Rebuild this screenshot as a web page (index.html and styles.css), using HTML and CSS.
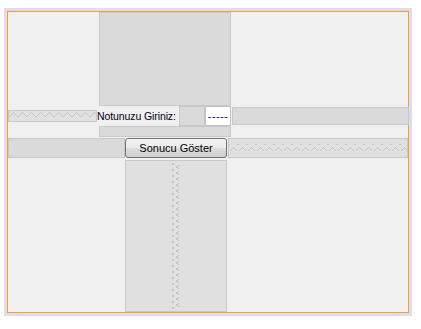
FILE: index.html
```html
<!DOCTYPE html>
<html lang="en">
<head>
    <meta charset="UTF-8">
    <title>Not Formu</title>
    <link rel="stylesheet" href="styles.css">
</head>
<body>
    <svg class="defs" width="0" height="0">
        <defs>
            <pattern id="zigH" width="9" height="7" patternUnits="userSpaceOnUse">
                <polyline points="0,6 4.5,1.5 9,6" fill="none" stroke="#c4c4c4" stroke-width="1" shape-rendering="crispEdges"/>
            </pattern>
            <pattern id="zigV" width="7" height="6" patternUnits="userSpaceOnUse">
                <polyline points="1,0 6,3 1,6" fill="none" stroke="#c4c4c4" stroke-width="1" shape-rendering="crispEdges"/>
            </pattern>
        </defs>
    </svg>

    <div class="selection">
        <div class="form">
            <div class="row row-top">
                <div class="gap gap-top"></div>
            </div>

            <div class="row row-input">
                <div class="gap zig gap-left">
                    <svg><rect x="0" y="1" width="100%" height="7" fill="url(#zigH)"/></svg>
                </div>
                <label class="caption">Notunuzu Giriniz:</label>
                <div class="gap gap-small"></div>
                <div class="field">-----</div>
                <div class="gap gap-right"></div>
            </div>

            <div class="row row-under">
                <div class="gap gap-under"></div>
            </div>

            <div class="row row-button">
                <div class="gap gap-btn-left"></div>
                <button class="btn">Sonucu Göster</button>
                <div class="gap zig gap-btn-right">
                    <svg><rect x="0" y="5" width="100%" height="7" fill="url(#zigH)"/></svg>
                </div>
            </div>

            <div class="row row-bottom">
                <div class="gap zig gap-bottom">
                    <svg><rect x="46" y="2" width="7" height="146" fill="url(#zigV)"/></svg>
                </div>
            </div>
        </div>
    </div>
</body>
</html>
```

FILE: styles.css
```css
* {
    box-sizing: border-box;
}

body {
    margin: 0;
    background: white;
    font-family: "Liberation Sans", Arial, sans-serif;
    font-size: 11px;
}

.defs {
    position: absolute;
}

.selection {
    margin: 8px 0 0 4px;
    width: 408px;
    padding: 3px;
    background: #dcdcf8;
}

.form {
    width: 402px;
    height: 302px;
    border: 1px solid #ffa500;
    background: #f0f0f0;
}

.row {
    display: flex;
    align-items: flex-start;
}

.gap {
    flex-shrink: 0;
    background: #dadada;
    border: 1px solid #c8c8c8;
}

.gap.zig {
    background: #e0e0e0;
}

.gap svg {
    display: block;
    width: 100%;
    height: 100%;
}

.row-top { height: 94px; }
.gap-top {
    width: 132px;
    height: 94px;
    margin-left: 91px;
}

.row-input { height: 20px; }
.gap-left {
    width: 89px;
    height: 12px;
    margin-top: 4px;
}

.caption {
    flex-shrink: 0;
    width: 82px;
    height: 20px;
    line-height: 21px;
    font-size: 10.5px;
    letter-spacing: -0.1px;
    color: #000018;
    white-space: nowrap;
}

.gap-small {
    width: 26px;
    height: 20px;
}

.field {
    flex-shrink: 0;
    width: 26px;
    height: 20px;
    background: white;
    border: 1px solid #c4c4c4;
    line-height: 18px;
    text-align: center;
    letter-spacing: 0.4px;
    color: #00008b;
}

.gap-right {
    width: 177px;
    height: 18px;
    margin: 1px 0 0 1px;
}

.row-under { height: 11px; margin-bottom: 1px; }
.gap-under {
    width: 132px;
    height: 11px;
    margin-left: 91px;
}

.row-button { height: 20px; margin-bottom: 2px; }
.gap-btn-left {
    width: 117px;
    height: 20px;
}

.btn {
    flex-shrink: 0;
    width: 102px;
    height: 20px;
    padding: 0;
    border: 1px solid #707070;
    border-radius: 3px;
    background: linear-gradient(#f2f2f2 0%, #ebebeb 50%, #dddddd 51%, #cfcfcf 100%);
    font-family: inherit;
    font-size: 11px;
    color: #000;
}

.gap-btn-right {
    width: 180px;
    height: 20px;
    margin-left: 1px;
}

.row-bottom { height: 152px; }
.gap-bottom {
    width: 102px;
    height: 152px;
    margin-left: 117px;
}
```
